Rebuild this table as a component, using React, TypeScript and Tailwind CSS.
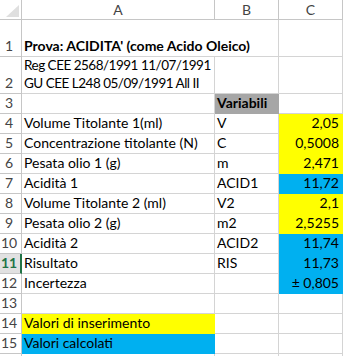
import React from 'react';

type Fill = 'none' | 'yellow' | 'blue' | 'gray';

interface CellProps {
  children?: React.ReactNode;
  w: string;
  fill?: Fill;
  right?: boolean;
  bold?: boolean;
  noRight?: boolean;
}

const fillClass: Record<Fill, string> = {
  none: 'bg-white border-[#d4d4d4]',
  yellow: 'bg-[#ffff00] border-[#ffff00]',
  blue: 'bg-[#00b0f0] border-[#00b0f0]',
  gray: 'bg-[#a6a6a6] border-[#a6a6a6]',
};

const Cell: React.FC<CellProps> = ({ children, w, fill = 'none', right, bold, noRight }) => (
  <div
    className={[
      w,
      'h-full shrink-0 border-b flex items-end pb-[1px] whitespace-nowrap',
      noRight ? 'border-r-0 overflow-visible relative z-10' : 'border-r overflow-hidden',
      fillClass[fill],
      right ? 'justify-end pr-[3px]' : 'pl-[2px]',
      bold ? 'font-bold' : '',
    ].join(' ')}
  >
    {children}
  </div>
);

interface RowProps {
  num: number;
  h: string;
  a?: React.ReactNode;
  b?: React.ReactNode;
  c?: React.ReactNode;
  aFill?: Fill;
  bFill?: Fill;
  cFill?: Fill;
  aBold?: boolean;
  bBold?: boolean;
  aOverflow?: boolean;
  active?: boolean;
}

const Row: React.FC<RowProps> = ({ num, h, a, b, c, aFill, bFill, cFill, aBold, bBold, aOverflow, active }) => (
  <div className={`flex ${h}`}>
    <div
      className={
        active
          ? 'w-[22px] h-full shrink-0 border-b border-[#c6c6c6] border-r-2 border-r-[#217346] bg-[#e1e1e1] text-[#217346] font-bold flex items-end justify-center pr-[2px] pb-[1px]'
          : 'w-[22px] h-full shrink-0 border-b border-r border-[#c6c6c6] bg-white text-[#444] flex items-end justify-center pr-[3px] pb-[1px]'
      }
    >
      {num}
    </div>
    <Cell w="w-[193px]" fill={aFill} bold={aBold} noRight={aOverflow}>
      {a}
    </Cell>
    <Cell w="w-[64px]" fill={bFill} bold={bBold}>
      {b}
    </Cell>
    <Cell w="w-[64px]" fill={cFill} right>
      {c}
    </Cell>
  </div>
);

export default function App() {
  return (
    <div className="w-[344px] h-[356px] bg-white overflow-hidden text-[14px] leading-[18px] text-black font-['Lato','Carlito',sans-serif]">
      {/* column headers */}
      <div className="flex h-[20px] text-[#444]">
        <div className="w-[22px] h-full shrink-0 border-b border-r border-[#c6c6c6] relative">
          <svg className="absolute left-[6px] top-[5px]" width="13" height="12" viewBox="0 0 13 12">
            <polygon points="0,12 13,12 13,0" fill="#dfdfdf" />
          </svg>
        </div>
        <div className="w-[193px] h-full shrink-0 border-b border-r border-[#c6c6c6] flex items-center justify-center">A</div>
        <div className="w-[64px] h-full shrink-0 border-b border-r border-[#c6c6c6] flex items-center justify-center">B</div>
        <div className="w-[64px] h-full shrink-0 border-b border-r border-[#c6c6c6] flex items-center justify-center">C</div>
      </div>

      <Row num={1} h="h-[37px]" a="Prova: ACIDITA' (come Acido Oleico)" aBold aOverflow />
      <div className="flex h-[37px]">
        <div className="w-[22px] h-full shrink-0 border-b border-r border-[#c6c6c6] text-[#444] flex items-end justify-center pr-[3px] pb-[1px]">
          2
        </div>
        <div className="w-[193px] h-full shrink-0 border-b border-r border-[#d4d4d4] flex flex-col justify-end pl-[2px] pb-[1px] whitespace-nowrap text-[13.5px] tracking-[-0.5px]">
          <span className="leading-[17px]">Reg CEE 2568/1991 11/07/1991</span>
          <span className="leading-[18px]">GU CEE L248 05/09/1991 All II</span>
        </div>
        <div className="w-[64px] h-full shrink-0 border-b border-r border-[#d4d4d4]" />
        <div className="w-[64px] h-full shrink-0 border-b border-r border-[#d4d4d4]" />
      </div>
      <Row num={3} h="h-[20px]" b="Variabili" bFill="gray" bBold />
      <Row num={4} h="h-[20px]" a="Volume Titolante 1(ml)" b="V" c="2,05" cFill="yellow" />
      <Row num={5} h="h-[20px]" a="Concentrazione titolante (N)" b="C" c="0,5008" cFill="yellow" />
      <Row num={6} h="h-[20px]" a="Pesata olio 1 (g)" b="m" c="2,471" cFill="yellow" />
      <Row num={7} h="h-[20px]" a="Acidità 1" b="ACID1" c="11,72" cFill="blue" />
      <Row num={8} h="h-[20px]" a="Volume Titolante 2 (ml)" b="V2" c="2,1" cFill="yellow" />
      <Row num={9} h="h-[20px]" a="Pesata olio 2 (g)" b="m2" c="2,5255" cFill="yellow" />
      <Row num={10} h="h-[20px]" a="Acidità 2" b="ACID2" c="11,74" cFill="blue" />
      <Row num={11} h="h-[20px]" a="Risultato" b="RIS" c="11,73" cFill="blue" active />
      <Row num={12} h="h-[20px]" a="Incertezza" c="± 0,805" cFill="blue" />
      <Row num={13} h="h-[20px]" />
      <Row num={14} h="h-[20px]" a="Valori di inserimento" aFill="yellow" />
      <Row num={15} h="h-[20px]" a="Valori calcolati" aFill="blue" />
      <div className="flex h-[20px]">
        <div className="w-[22px] h-full shrink-0 border-r border-[#c6c6c6]" />
        <div className="w-[193px] h-full shrink-0 border-r border-[#d4d4d4]" />
        <div className="w-[64px] h-full shrink-0 border-r border-[#d4d4d4]" />
        <div className="w-[64px] h-full shrink-0 border-r border-[#d4d4d4]" />
      </div>
    </div>
  );
}
